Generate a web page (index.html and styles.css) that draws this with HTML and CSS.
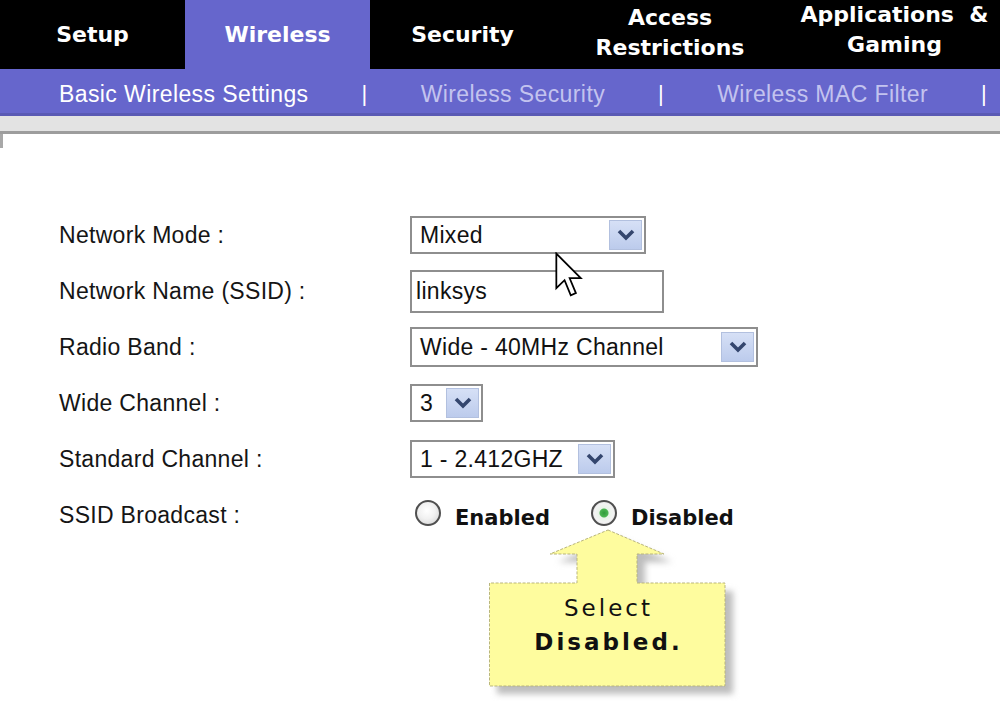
FILE: index.html
```html
<!DOCTYPE html>
<html>
<head>
<meta charset="utf-8">
<title>Basic Wireless Settings</title>
<link rel="stylesheet" href="styles.css">
</head>
<body>
<div class="page">
  <nav class="tabs">
    <div class="tab t-setup">Setup</div>
    <div class="tab t-wireless active">Wireless</div>
    <div class="tab t-security">Security</div>
    <div class="tab t-access">Access<br>Restrictions</div>
    <div class="tab t-apps">Applications &nbsp;&amp;<br>Gaming</div>
  </nav>
  <div class="subnav">
    <span class="sub current">Basic Wireless Settings</span>
    <span class="sep">|</span>
    <span class="sub">Wireless Security</span>
    <span class="sep">|</span>
    <span class="sub">Wireless MAC Filter</span>
    <span class="sep">|</span>
  </div>
  <div class="rule"></div>
  <main class="content">
    <div class="mark"></div>
    <div class="form">
      <div class="label">Network Mode :</div>
      <div class="field">
        <div class="select w-mode"><span class="val">Mixed</span><span class="btn"><svg width="18" height="12" viewBox="0 0 18 12"><polyline points="2,2 9,9 16,2" fill="none" stroke="#34466e" stroke-width="3.6"/></svg></span></div>
      </div>

      <div class="label">Network Name (SSID) :</div>
      <div class="field">
        <div class="input">linksys</div>
      </div>

      <div class="label">Radio Band :</div>
      <div class="field">
        <div class="select w-band"><span class="val">Wide - 40MHz Channel</span><span class="btn"><svg width="18" height="12" viewBox="0 0 18 12"><polyline points="2,2 9,9 16,2" fill="none" stroke="#34466e" stroke-width="3.6"/></svg></span></div>
      </div>

      <div class="label">Wide Channel :</div>
      <div class="field">
        <div class="select w-wide"><span class="val">3</span><span class="btn"><svg width="18" height="12" viewBox="0 0 18 12"><polyline points="2,2 9,9 16,2" fill="none" stroke="#34466e" stroke-width="3.6"/></svg></span></div>
      </div>

      <div class="label">Standard Channel :</div>
      <div class="field">
        <div class="select w-std"><span class="val">1 - 2.412GHZ</span><span class="btn"><svg width="18" height="12" viewBox="0 0 18 12"><polyline points="2,2 9,9 16,2" fill="none" stroke="#34466e" stroke-width="3.6"/></svg></span></div>
      </div>

      <div class="label">SSID Broadcast :</div>
      <div class="field radios">
        <span class="radio"></span><span class="rlabel">Enabled</span>
        <span class="radio checked"></span><span class="rlabel">Disabled</span>
      </div>
    </div>

    <svg class="cursor" width="28" height="46" viewBox="0 0 12.6 20.5">
      <path d="M0.6,0.6 L0.6,16.2 L4.3,12.6 L7.1,19.4 L9.4,18.4 L6.6,11.7 L11.6,11.7 Z" fill="#fff" stroke="#000" stroke-width="0.8" stroke-linejoin="miter"/>
    </svg>

    <div class="callout">
      <svg class="callout-bg" width="252" height="172" viewBox="0 0 252 172">
        <defs>
          <filter id="blur" x="-10%" y="-10%" width="130%" height="130%">
            <feGaussianBlur stdDeviation="3"/>
          </filter>
        </defs>
        <polygon points="127,9 183,33 156,33 156,62 244,62 244,165 8,165 8,62 96,62 96,33 69,33" fill="#bdbdbd" filter="url(#blur)"/>
        <polygon points="119,1 175,25 148,25 148,54 236,54 236,157 0.5,157 0.5,54 88,54 88,25 61,25" fill="#fefc9e" stroke="#b9b57c" stroke-width="1" stroke-dasharray="3 1.5"/>
      </svg>
      <div class="callout-text">
        <span class="c1">Select</span>
        <span class="c2">Disabled.</span>
      </div>
    </div>
  </main>
</div>
</body>
</html>
```

FILE: styles.css
```css
html, body {
  margin: 0;
  padding: 0;
  background: #fff;
}

.page {
  width: 1000px;
  height: 707px;
  overflow: hidden;
  font-family: "Liberation Sans", Arial, sans-serif;
  color: #111;
}

.tabs {
  display: flex;
  height: 69px;
  background: #000;
}

.tab {
  display: flex;
  align-items: center;
  justify-content: center;
  text-align: center;
  color: #fff;
  font-family: "DejaVu Sans", Verdana, sans-serif;
  font-weight: bold;
  font-size: 22px;
  line-height: 30px;
  box-sizing: border-box;
}

.t-setup { width: 185px; }
.t-wireless { width: 185px; }
.t-security { width: 185px; }
.t-access { width: 230px; padding-bottom: 4px; }
.t-apps { width: 215px; padding-bottom: 10px; padding-left: 4px; }

.tab.active {
  background: #6666cc;
}

.subnav {
  height: 44px;
  box-sizing: border-box;
  padding-top: 6px;
  background: #6666cc;
  display: flex;
  align-items: center;
  padding-left: 59px;
  gap: 53px;
  font-size: 23px;
  letter-spacing: 0.4px;
  color: #c3c3ef;
}

.sub.current {
  color: #fff;
}

.sep {
  color: #fff;
  font-size: 22px;
}

.rule {
  height: 15px;
  background: #e3e3e3;
  border-top: 3px solid #5a5ab4;
  border-bottom: 3px solid #9d9d9d;
}

.content {
  position: relative;
  height: 573px;
}

.mark {
  width: 3px;
  height: 14px;
  background: #a8a8a8;
}

.form {
  margin-top: 59px;
  display: grid;
  grid-template-columns: 410px auto;
  grid-auto-rows: 56px;
  align-items: center;
}

.label {
  padding-left: 59px;
  font-size: 23px;
  letter-spacing: 0.3px;
  color: #151515;
}

.field {
  display: flex;
  align-items: center;
}

.select {
  display: flex;
  align-items: center;
  height: 38px;
  box-sizing: border-box;
  border: 2px solid #8e8e8e;
  background: #fff;
  padding-left: 8px;
  font-size: 23px;
  letter-spacing: 0.3px;
  color: #111;
}

.select .val {
  flex: 1;
  white-space: nowrap;
}

.select .btn {
  width: 33px;
  height: 30px;
  margin-right: 2px;
  box-sizing: border-box;
  border: 1px solid #b2c0df;
  background: linear-gradient(#d6e0f6, #bccbec);
  display: flex;
  align-items: center;
  justify-content: center;
}

.w-mode { width: 236px; }
.w-band { width: 348px; height: 40px; }
.w-wide { width: 73px; }
.w-std { width: 205px; }

.input {
  width: 254px;
  height: 43px;
  box-sizing: border-box;
  border: 2px solid #8e8e8e;
  padding-left: 4px;
  display: flex;
  align-items: center;
  font-size: 23px;
  letter-spacing: 0.3px;
  color: #111;
}

.radios {
  padding-left: 5px;
  margin-top: -4px;
}

.radio {
  width: 26px;
  height: 26px;
  box-sizing: border-box;
  border: 2px solid #4f4f4f;
  border-radius: 50%;
  background: radial-gradient(circle at 45% 40%, #ffffff 0%, #f1f1f1 45%, #cfcfcf 100%);
}

.radio.checked {
  background: radial-gradient(circle, #2f9a3a 0, #4bb552 4px, #e8f3e8 5px, #f3f3f3 60%, #cfcfcf 100%);
}

.rlabel {
  font-family: "DejaVu Sans", Verdana, sans-serif;
  font-weight: bold;
  font-size: 21px;
  color: #111;
  margin-left: 14px;
  margin-right: 41px;
  margin-top: 9px;
}

.cursor {
  position: absolute;
  left: 555px;
  top: 118px;
}

.callout {
  position: absolute;
  left: 489px;
  top: 395px;
  width: 252px;
  height: 172px;
}

.callout-bg {
  position: absolute;
  left: 0;
  top: 0;
}

.callout-text {
  position: relative;
  width: 236px;
  padding-top: 62px;
  display: flex;
  flex-direction: column;
  align-items: center;
  font-family: "DejaVu Sans", Verdana, sans-serif;
  font-size: 23px;
  line-height: 34px;
  letter-spacing: 3px;
  color: #111;
}

.c1 {
  font-weight: normal;
  padding-left: 3px;
}

.c2 {
  font-weight: bold;
  padding-left: 3px;
}
```
